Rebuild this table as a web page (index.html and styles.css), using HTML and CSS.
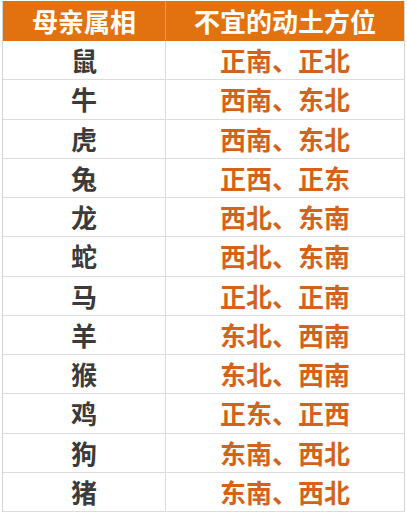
FILE: index.html
```html
<!DOCTYPE html>
<html lang="zh-CN">
<head>
<meta charset="utf-8">
<title>母亲属相 不宜的动土方位</title>
<link rel="stylesheet" href="styles.css">
</head>
<body>
<div class="table">
  <div class="cell head first">母亲属相</div>
  <div class="cell head">不宜的动土方位</div>

  <div class="cell first">鼠</div><div class="cell dir">正南、正北</div>
  <div class="cell first">牛</div><div class="cell dir">西南、东北</div>
  <div class="cell first">虎</div><div class="cell dir">西南、东北</div>
  <div class="cell first">兔</div><div class="cell dir">正西、正东</div>
  <div class="cell first">龙</div><div class="cell dir">西北、东南</div>
  <div class="cell first">蛇</div><div class="cell dir">西北、东南</div>
  <div class="cell first">马</div><div class="cell dir">正北、正南</div>
  <div class="cell first">羊</div><div class="cell dir">东北、西南</div>
  <div class="cell first">猴</div><div class="cell dir">东北、西南</div>
  <div class="cell first">鸡</div><div class="cell dir">正东、正西</div>
  <div class="cell first">狗</div><div class="cell dir">东南、西北</div>
  <div class="cell first">猪</div><div class="cell dir">东南、西北</div>
</div>
</body>
</html>
```

FILE: styles.css
```css
html, body {
  margin: 0;
  padding: 0;
  background: #ffffff;
}

body {
  padding: 1px 0 0 2px;
  font-family: "Noto Sans CJK SC", "Noto Sans", sans-serif;
}

.table {
  width: 403px;
  display: grid;
  grid-template-columns: 163px 1fr;
  grid-template-rows: 40px repeat(12, 39.25px);
  box-sizing: border-box;
  border-left: 1px solid #d4d4d4;
  border-right: 1px solid #d4d4d4;
}

.cell {
  display: flex;
  align-items: center;
  justify-content: center;
  border-bottom: 1px solid #dcdcdc;
  font-size: 26px;
  font-weight: 700;
  line-height: 1;
  color: #3b3b3b;
  box-sizing: border-box;
}

.first {
  border-right: 1px solid #dcdcdc;
}

.head {
  background: #e2720f;
  color: #ffffff;
  border-bottom-color: #e2720f;
}

.head.first {
  border-right-color: #d9a070;
}

.dir {
  color: #d3631c;
}
```
